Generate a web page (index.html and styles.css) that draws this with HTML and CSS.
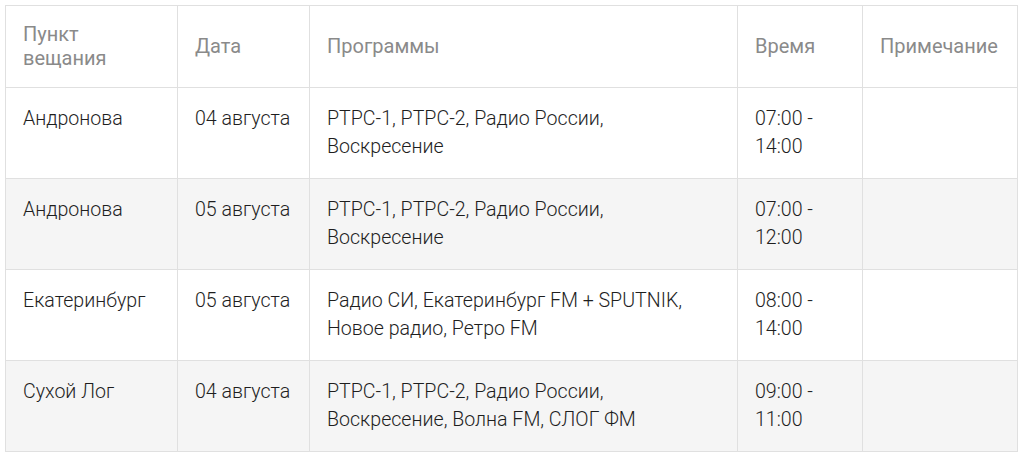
FILE: index.html
```html
<!DOCTYPE html>
<html lang="ru">
<head>
<meta charset="utf-8">
<link rel="stylesheet" href="styles.css">
</head>
<body>
<table class="schedule">
  <colgroup>
    <col class="c1"><col class="c2"><col class="c3"><col class="c4"><col class="c5">
  </colgroup>
  <thead>
    <tr><th>Пункт вещания</th><th>Дата</th><th>Программы</th><th>Время</th><th>Примечание</th></tr>
  </thead>
  <tbody>
    <tr><td>Андронова</td><td>04 августа</td><td>РТРС-1, РТРС-2, Радио России, Воскресение</td><td>07:00 - 14:00</td><td></td></tr>
    <tr><td>Андронова</td><td>05 августа</td><td>РТРС-1, РТРС-2, Радио России, Воскресение</td><td>07:00 - 12:00</td><td></td></tr>
    <tr><td>Екатеринбург</td><td>05 августа</td><td>Радио СИ, Екатеринбург FM + SPUTNIK, Новое радио, Ретро FM</td><td>08:00 - 14:00</td><td></td></tr>
    <tr><td>Сухой Лог</td><td>04 августа</td><td>РТРС-1, РТРС-2, Радио России, Воскресение, Волна FM, СЛОГ ФМ</td><td>09:00 - 11:00</td><td></td></tr>
  </tbody>
</table>
</body>
</html>
```
FILE: styles.css
```css
html, body {
  margin: 0;
  padding: 0;
  background: #fff;
}
body {
  padding: 5px 0 0 5px;
  font-family: Roboto, "Liberation Sans", sans-serif;
  font-size: 19.6px;
  font-weight: 300;
  color: #1e1e1e;
}
.schedule {
  border-collapse: collapse;
  table-layout: fixed;
  width: 1012px;
}
.c1 { width: 172px; }
.c2 { width: 132px; }
.c3 { width: 428px; }
.c4 { width: 125px; }
.c5 { width: 155px; }
.schedule th,
.schedule td {
  border: 1px solid #e0e0e0;
  text-align: left;
  padding: 17px 17px;
  line-height: 28px;
}
.schedule th {
  font-weight: 400;
  font-size: 20px;
  color: #8a8a8a;
  line-height: 24px;
  vertical-align: middle;
  height: 47px;
  padding-top: 16px;
  padding-bottom: 17px;
}
.schedule td {
  vertical-align: top;
  height: 56px;
}
.schedule tbody tr:nth-child(even) td {
  background: #f5f5f5;
}
```
